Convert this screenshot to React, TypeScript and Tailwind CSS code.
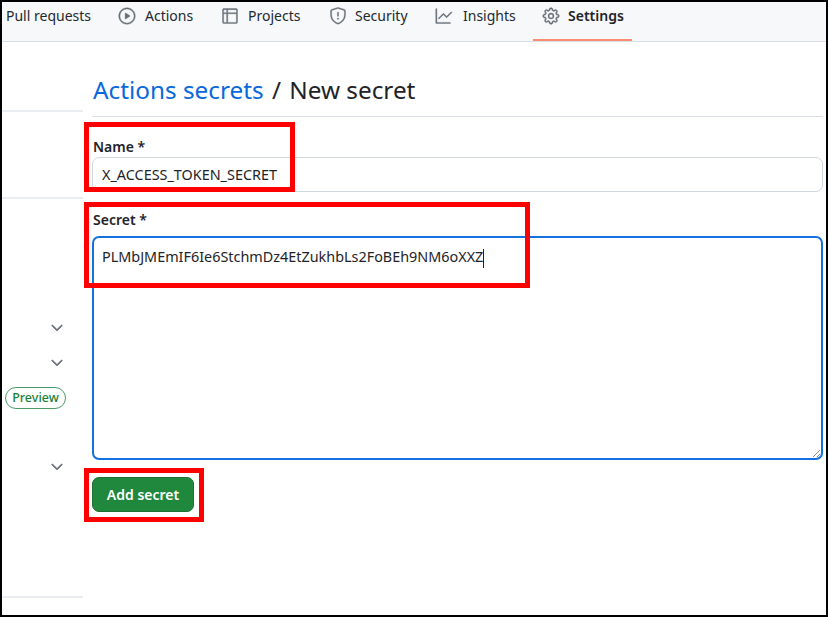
import React from 'react';
import { GoPlay, GoTable, GoShield, GoGraph, GoGear, GoChevronDown } from 'react-icons/go';

const RedBox = ({ className }: { className: string }) => (
  <div className={`absolute border-[5px] border-[#ff0000] pointer-events-none ${className}`} />
);

const Tab = ({ icon, label, className }: { icon?: React.ReactNode; label: string; className: string }) => (
  <a className={`flex items-center text-[14px] text-[#24292f] ${className}`}>
    {icon}
    <span className="pb-[2px]">{label}</span>
  </a>
);

const App = () => {
  return (
    <div className="relative w-[828px] h-[617px] bg-white border-2 border-black overflow-hidden font-['Noto_Sans',sans-serif] text-[#1f2328]">
      <nav className="flex items-center h-[40px] bg-[#f6f8fa] border-b border-[#d8dee4] pl-[4px] pb-[11px]">
        <Tab label="Pull requests" className="w-[112px]" />
        <Tab label="Actions" icon={<GoPlay strokeWidth={0.5} className="w-[18px] h-[18px] text-[#656d76] mr-[9px]" />} className="w-[103px]" />
        <Tab label="Projects" icon={<GoTable strokeWidth={0.5} className="w-[18px] h-[18px] text-[#656d76] mr-[9px]" />} className="w-[108px]" />
        <Tab label="Security" icon={<GoShield strokeWidth={0.5} className="w-[18px] h-[18px] text-[#656d76] mr-[8px]" />} className="w-[106px]" />
        <Tab label="Insights" icon={<GoGraph strokeWidth={0.5} className="w-[18px] h-[18px] text-[#656d76] mr-[10px]" />} className="w-[98px]" />
        <div className="relative flex items-center h-[28px] w-[99px] pl-[9px]">
          <GoGear strokeWidth={0.5} className="w-[18px] h-[18px] text-[#656d76] mr-[8px]" />
          <span className="text-[14px] font-semibold pb-[2px]">Settings</span>
          <div className="absolute left-0 right-0 -bottom-[11px] h-[2px] bg-[#fd8c73]" />
        </div>
      </nav>

      <div className="flex">
        <aside className="w-[81px] shrink-0 flex flex-col">
          <div className="h-[70px] border-b-2 border-[#eaeef2]" />
          <div className="h-[87px] border-b-2 border-[#eaeef2]" />
          <div className="flex flex-col items-end pr-[17px] text-[#656d76]">
            <GoChevronDown strokeWidth={1} className="w-[18px] h-[18px] mt-[120px]" />
            <GoChevronDown strokeWidth={1} className="w-[18px] h-[18px] mt-[17px]" />
          </div>
          <div className="mt-[15px] ml-[3px] w-[61px] h-[22px] flex items-center justify-center rounded-full border border-[#4c9a6a] text-[12.5px] font-medium text-[#1a7f37]">
            Preview
          </div>
          <div className="flex justify-end pr-[17px] text-[#656d76]">
            <GoChevronDown strokeWidth={1} className="w-[18px] h-[18px] mt-[49px]" />
          </div>
          <div className="mt-[120px] border-b-2 border-[#eaeef2]" />
        </aside>

        <main className="flex-1 pl-[9px] pr-[3px]">
          <div className="h-[75px] border-b border-[#d8dee4] flex items-end pb-[10px]">
            <h1 className="text-[24.3px] leading-[32px] pl-px">
              <span className="text-[#0969da]">Actions secrets</span>
              <span className="px-[2px]"> / </span>New secret
            </h1>
          </div>
          <div className="mt-[20px] text-[14px] leading-[20px] font-semibold pl-px">Name *</div>
          <div className="h-[35px] flex items-center pl-[9px] border border-[#d0d7de] rounded-[7px] text-[14.4px]">
            X_ACCESS_TOKEN_SECRET
          </div>
          <div className="mt-[18px] text-[14px] leading-[20px] font-semibold pl-px">Secret *</div>
          <div className="relative mt-[6px] h-[224px] pl-[8px] pt-[7px] border-2 border-[#1570e0] rounded-[7px] text-[14.4px] leading-[24px]">
            <span>PLMbJMEmIF6Ie6StchmDz4EtZukhbLs2FoBEh9NM6oXXZ</span>
            <span className="inline-block align-middle w-px h-[19px] bg-[#1f2328]" />
            <svg className="absolute right-0 bottom-0" width="9" height="9" viewBox="0 0 9 9">
              <path d="M1 8 8 1M5 8 8 5" stroke="#8c8c8c" strokeWidth="1" fill="none" />
            </svg>
          </div>
          <button className="mt-[17px] w-[102px] h-[35px] rounded-[7px] bg-[#1f883d] border border-[#1a7035] text-white text-[14px] font-semibold">
            Add secret
          </button>
        </main>
      </div>

      <RedBox className="left-[82px] top-[120px] w-[211px] h-[70px]" />
      <RedBox className="left-[82px] top-[200px] w-[446px] h-[86px]" />
      <RedBox className="left-[82px] top-[466px] w-[120px] h-[54px]" />
    </div>
  );
};

export default App;
